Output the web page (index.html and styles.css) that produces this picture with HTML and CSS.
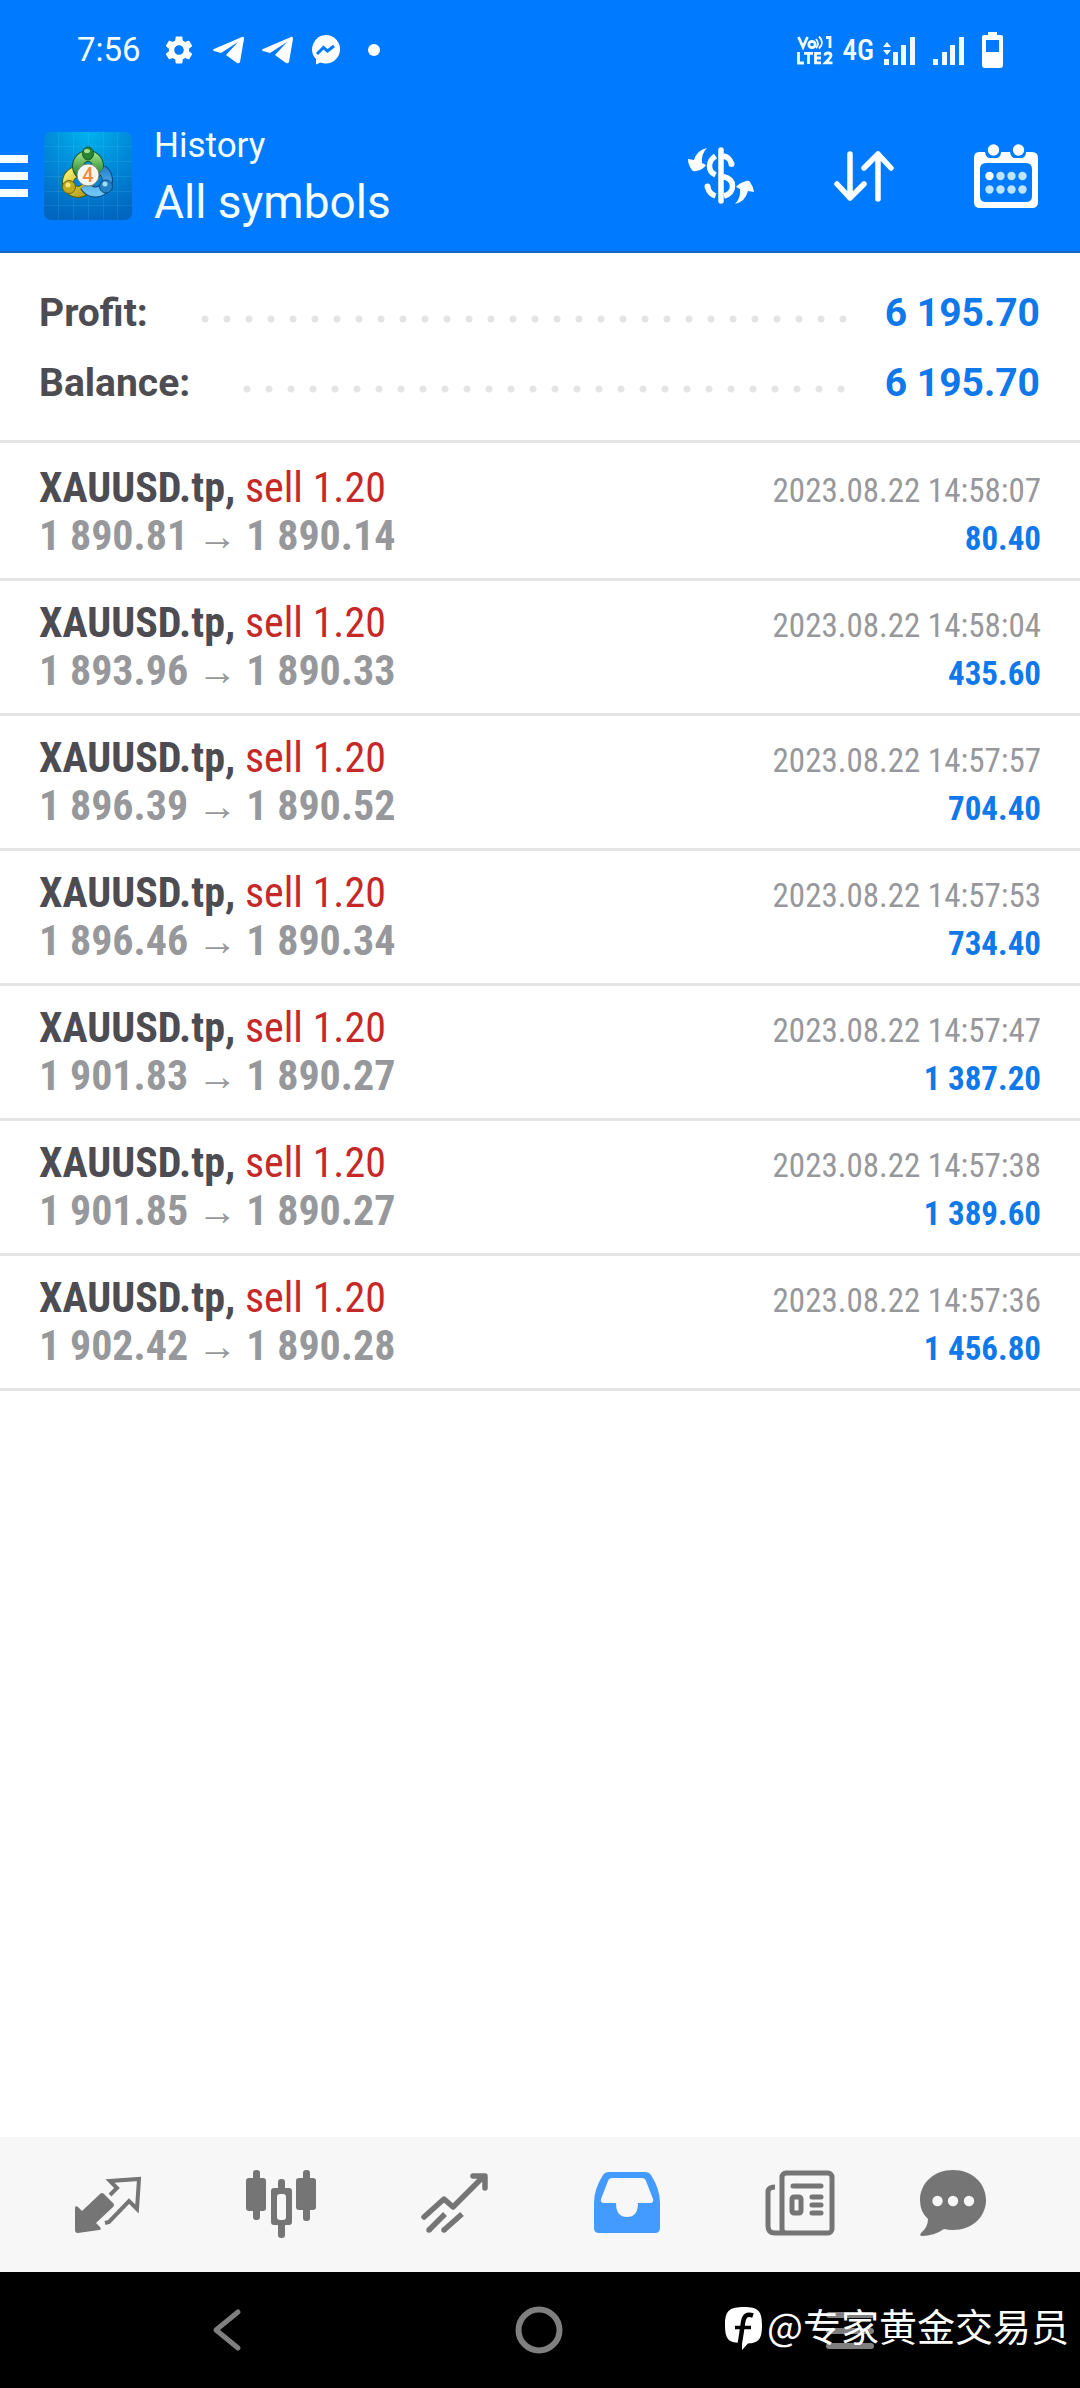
FILE: index.html
```html
<!DOCTYPE html>
<html lang="en">
<head>
<meta charset="utf-8">
<meta name="viewport" content="width=device-width, initial-scale=1">
<title>History</title>
<link rel="stylesheet" href="styles.css">
</head>
<body>
<header class="top">
  <div class="status">
    <div class="status-left">
      <span class="clock">7:56</span>
      <svg class="s-gear" width="28" height="28" viewBox="2 2 20 20" fill="#fff"><path d="M19.14 12.94c.04-.3.06-.61.06-.94s-.02-.64-.07-.94l2.03-1.58c.18-.14.23-.41.12-.61l-1.92-3.32c-.12-.22-.37-.29-.59-.22l-2.39.96c-.5-.38-1.03-.7-1.62-.94L14.4 2.81c-.04-.24-.24-.41-.48-.41h-3.84c-.24 0-.43.17-.47.41L9.25 5.35c-.59.24-1.13.57-1.62.94L5.24 5.33c-.22-.08-.47 0-.59.22L2.74 8.87c-.12.21-.08.47.12.61l2.03 1.58c-.05.3-.09.63-.09.94s.02.64.07.94l-2.03 1.58c-.18.14-.23.41-.12.61l1.92 3.32c.12.22.37.29.59.22l2.39-.96c.5.38 1.03.7 1.62.94l.36 2.54c.05.24.24.41.48.41h3.84c.24 0 .44-.17.47-.41l.36-2.54c.59-.24 1.13-.56 1.62-.94l2.39.96c.22.08.47 0 .59-.22l1.92-3.32c.12-.22.07-.47-.12-.61l-2.01-1.58zM12 15.4c-1.9 0-3.4-1.5-3.4-3.4s1.5-3.4 3.4-3.4 3.4 1.5 3.4 3.4-1.5 3.4-3.4 3.4z"/></svg>
      <svg width="31" height="28" viewBox="0 0 31 28" fill="#fff"><path d="M1 13 29 1q2-1 2 2l-4 23q-1 2-3 1L13 19l12-13L8 17 1 15q-2-1 0-2z"/></svg>
      <svg width="31" height="28" viewBox="0 0 31 28" fill="#fff"><path d="M1 13 29 1q2-1 2 2l-4 23q-1 2-3 1L13 19l12-13L8 17 1 15q-2-1 0-2z"/></svg>
      <svg width="29" height="30" viewBox="0 0 29 30"><path fill="#fff" d="M14.500 0a14.300 14.300 0 1 1-5 27.600L5 29.500V24A14.300 14.300 0 0 1 14.500 0z"/><path d="M6 19l6.500-6.500 4 3.500L23 11" fill="none" stroke="#007aff" stroke-width="3"/></svg>
      <span class="more"></span>
    </div>
    <div class="status-right">
      <svg width="36" height="30" viewBox="0 0 36 30" fill="none" stroke="#f0fbff" stroke-width="2.800"><path d="M1.500 2l4.500 10 4.500-10"/><circle cx="15" cy="9.500" r="3.200"/><path d="M19 4q4 5 0 9M22 1.500q6 6 0 12" stroke-width="1.800"/><path d="M29 2.500h4V13"/><path d="M1.500 17v11H7M7 18.300h9M11.500 18v11M24 18.300h-5.500v9.500H24M19 23h5"/><path d="M28 20.500q0-2.500 3-2.500t3 2.500q0 2-5.500 7.300h7"/></svg>
      <span class="net">4G</span>
      <svg class="sig1" width="32" height="29" viewBox="0 0 32 29" fill="#f0fbff"><path d="M1 23h5v6H1zM10 16h5v13h-5zM18 9h5v20h-5zM27 1h5v28h-5zM4 6l4 5H0zM4 19l4-5H0z"/></svg>
      <svg class="sig2" width="31" height="29" viewBox="0 0 31 29" fill="#f0fbff"><path d="M0 23h5v6H0zM9 16h5v13H9zM17 9h5v20h-5zM26 1h5v28h-5z"/></svg>
      <svg width="21" height="36" viewBox="0 0 21 36"><path fill="#fff" d="M6 0h9v3h4q2 0 2 2v28q0 3-3 3H3q-3 0-3-3V5q0-2 2-2h4z"/><path fill="#007aff" d="M4 8h13v12H4z"/></svg>
    </div>
  </div>
  <div class="appbar">
    <button class="menu" aria-label="Menu"><i></i><i></i><i></i></button>
    <svg class="logo" width="88" height="88" viewBox="0 0 88 88">
      <defs>
        <radialGradient id="bg" cx=".5" cy="0" r="1"><stop offset="0" stop-color="#00b2ee"/><stop offset=".5" stop-color="#0089d8"/><stop offset="1" stop-color="#0066c0"/></radialGradient>
        <linearGradient id="gr" x2="0" y2="1"><stop offset="0" stop-color="#8fd67c"/><stop offset="1" stop-color="#1d7d2a"/></linearGradient>
        <linearGradient id="ye" x2="1" y2="1"><stop offset="0" stop-color="#f3ec6a"/><stop offset="1" stop-color="#b59a14"/></linearGradient>
        <linearGradient id="bl" x2="0" y2="1"><stop offset="0" stop-color="#2a86cf"/><stop offset="1" stop-color="#6cc3f5"/></linearGradient>
      </defs>
      <rect width="88" height="88" rx="7" fill="url(#bg)"/>
      <path d="M14.500 0v88M29.500 0v88M44.500 0v88M59.500 0v88M73.500 0v88M0 14.500h88M0 29.500h88M0 44.500h88M0 59.500h88M0 73.500h88" stroke="#6fd0f5" stroke-opacity=".14"/>
      <circle cx="34" cy="50" r="10" fill="none" stroke="#54600f" stroke-width="12"/>
      <circle cx="34" cy="50" r="10" fill="none" stroke="url(#ye)" stroke-width="10"/>
      <circle cx="44" cy="34" r="10" fill="none" stroke="#14592a" stroke-width="12"/>
      <circle cx="44" cy="34" r="10" fill="none" stroke="url(#gr)" stroke-width="10"/>
      <path d="M58 38a12 12 0 1 1-17 16" fill="none" stroke="#0b4278" stroke-width="11"/>
      <path d="M58 38a12 12 0 1 1-17 16" fill="none" stroke="url(#bl)" stroke-width="9"/>
      <ellipse cx="44" cy="21.500" rx="5.500" ry="6.500" fill="#2a8434" stroke="#14592a"/><ellipse cx="43" cy="19" rx="3" ry="2" fill="#a5e08f"/>
      <circle cx="25" cy="55" r="6.500" fill="#c4a91c" stroke="#6b6410"/><circle cx="24" cy="53" r="2.500" fill="#f3e77a"/>
      <circle cx="62" cy="54.500" r="6.500" fill="#2382c6" stroke="#0b4a80"/><circle cx="61" cy="52" r="2.500" fill="#a4dcf8"/>
      <circle cx="44" cy="43" r="11" fill="#f4f6f6" stroke="#75846f"/>
      <text class="logo-digit" x="44" y="50" text-anchor="middle">4</text>
    </svg>
    <h1 class="titles"><span class="kicker">History</span><span class="title">All symbols</span></h1>
    <div class="actions">
      <button aria-label="Symbol"><svg width="66" height="58" viewBox="0 0 66 58"><path fill="#fbffff" d="M19 1q-6 6-5 15l4 2q-3 5-10 6-3 1-4-1Q0 18 0 12l6 1Q9 3 19 1zM47 57q6-6 5-15l-4-2q3-4 10-6 3-1 4 1 3 4 4 10l-6-1Q57 55 47 57z"/><path d="M33 3v51" stroke="#fbffff" stroke-width="5.500" stroke-linecap="round"/><path d="M27.500 9q-6 4-6 10t6 9M19.500 40q2 7 8 9" fill="none" stroke="#fbffff" stroke-width="5.500"/><circle cx="19.500" cy="39.500" r="3" fill="#fbffff"/><path d="M35 9q7 1 8.500 8M35 29.500q9.500 2 9.500 9.500T36 49" fill="none" stroke="#fbffff" stroke-width="5.500"/><circle cx="43.500" cy="17" r="3" fill="#fbffff"/></svg></button>
      <button aria-label="Sort"><svg width="60" height="52" viewBox="0 0 60 52" fill="none" stroke="#fbffff" stroke-width="5.500" stroke-linecap="round" stroke-linejoin="round"><path d="M16 4v44M3 34l13 14 14-14M44 49V4M30 18 44 4l13 14"/></svg></button>
      <button aria-label="Period"><svg width="64" height="64" viewBox="0 0 64 64"><path fill="#fff" fill-rule="evenodd" d="M5 8h6q1 6 5 6h7q4-1 4-6h9q1 6 5 6h7q4-1 4-6h6q6 0 6 6v44q0 6-6 6H6q-6 0-6-6V14q0-6 5-6zm7 11q-6 0-6 6v27q0 6 6 6h40q6 0 6-6V25q0-6-6-6z"/><circle cx="19.500" cy="6" r="5.700" fill="#fff"/><circle cx="44.500" cy="6" r="5.700" fill="#fff"/><g fill="#bfe4ff"><circle cx="15.500" cy="32" r="4.200" fill="#fff"/><circle cx="26.500" cy="32" r="4.200"/><circle cx="37.500" cy="32" r="4.200"/><circle cx="48.500" cy="32" r="4.200"/><circle cx="15.500" cy="45.500" r="4.200"/><circle cx="26.500" cy="45.500" r="4.200"/><circle cx="37.500" cy="45.500" r="4.200"/><circle cx="48.500" cy="45.500" r="4.200"/></g></svg></button>
    </div>
  </div>
</header>
<main>
  <dl class="summary">
    <div class="sum-row"><dt>Profit:</dt><dd>6 195.70</dd></div>
    <div class="sum-row"><dt>Balance:</dt><dd>6 195.70</dd></div>
  </dl>
  <ul class="deals">
    <li><span class="sym"><b>XAUUSD.tp,</b> <span class="side">sell 1.20</span></span><time>2023.08.22 14:58:07</time><span class="price">1 890.81<span class="to">→</span>1 890.14</span><span class="gain">80.40</span></li>
    <li><span class="sym"><b>XAUUSD.tp,</b> <span class="side">sell 1.20</span></span><time>2023.08.22 14:58:04</time><span class="price">1 893.96<span class="to">→</span>1 890.33</span><span class="gain">435.60</span></li>
    <li><span class="sym"><b>XAUUSD.tp,</b> <span class="side">sell 1.20</span></span><time>2023.08.22 14:57:57</time><span class="price">1 896.39<span class="to">→</span>1 890.52</span><span class="gain">704.40</span></li>
    <li><span class="sym"><b>XAUUSD.tp,</b> <span class="side">sell 1.20</span></span><time>2023.08.22 14:57:53</time><span class="price">1 896.46<span class="to">→</span>1 890.34</span><span class="gain">734.40</span></li>
    <li><span class="sym"><b>XAUUSD.tp,</b> <span class="side">sell 1.20</span></span><time>2023.08.22 14:57:47</time><span class="price">1 901.83<span class="to">→</span>1 890.27</span><span class="gain">1 387.20</span></li>
    <li><span class="sym"><b>XAUUSD.tp,</b> <span class="side">sell 1.20</span></span><time>2023.08.22 14:57:38</time><span class="price">1 901.85<span class="to">→</span>1 890.27</span><span class="gain">1 389.60</span></li>
    <li><span class="sym"><b>XAUUSD.tp,</b> <span class="side">sell 1.20</span></span><time>2023.08.22 14:57:36</time><span class="price">1 902.42<span class="to">→</span>1 890.28</span><span class="gain">1 456.80</span></li>
  </ul>
</main>
<nav class="tabs">
  <button aria-label="Quotes"><svg width="72" height="72" viewBox="0 0 72 72" fill="#757575"><path d="M3 38q0-3 3-1l4 4 18-17q2-2 4 0l9 9q2 2 0 4L24 53l4 4q2 3-1 3L6 63q-3 0-3-3z"/><path d="M38 25l7-7-7-7 29-2-2 30-8-8-20 21-4 1" fill="none" stroke="#757575" stroke-width="4"/></svg></button>
  <button aria-label="Charts"><svg width="72" height="72" viewBox="0 0 72 72" fill="#757575"><rect x="8" y="0" width="7" height="50" rx="3"/><rect x="1" y="8" width="20" height="33" rx="3"/><rect x="58" y="0" width="7" height="51" rx="3"/><rect x="51" y="8" width="20" height="32" rx="3"/><rect x="33" y="9" width="7" height="14" rx="3"/><rect x="33" y="50" width="7" height="18" rx="3"/><path fill-rule="evenodd" d="M29 18h15q3 0 3 3v31q0 3-3 3H29q-3 0-3-3V21q0-3 3-3zm6 6q-3 0-3 3v20q0 3 3 3h3q3 0 3-3V27q0-3-3-3z"/></svg></button>
  <button aria-label="Trade"><svg width="72" height="72" viewBox="0 0 72 72" fill="none" stroke="#757575" stroke-width="5.500"><path stroke-linecap="round" stroke-linejoin="round" d="M6 47 26 29l9 8 29-29M55 6h12v12"/><path d="M60 5h9v9z" fill="#757575" stroke="none"/><path d="M11 60l16-16M26 60l18-16"/><path d="M11 60h0M26 60h0" stroke-linecap="round"/></svg></button>
  <button aria-label="History"><svg width="72" height="72" viewBox="0 0 72 72"><path fill="#439bff" fill-rule="evenodd" d="M18 2h36q4 0 6 3 9 14 9 28v25q0 5-5 5H8q-5 0-5-5V33Q3 19 12 5q2-3 6-3zm3 6q-3 0-4 3L10 29q-1 4 3 4h12q0 14 11 14t11-14h12q4 0 3-4l-7-18q-1-3-4-3z"/></svg></button>
  <button aria-label="News"><svg width="72" height="72" viewBox="0 0 72 72" fill="none" stroke="#757575" stroke-width="5"><rect x="18" y="3" width="50" height="60" rx="4"/><path d="M11 17q-7 0-7 5v34q0 7 7 7h10"/><path stroke-linecap="round" d="M29 16h28M48 27h9M48 35h9M48 43h9"/><rect x="28" y="27" width="9" height="16" rx="2"/></svg></button>
  <button aria-label="Messages"><svg width="72" height="72" viewBox="0 0 72 72" fill="#757575"><path d="M36 0c19 0 33 13 33 30S55 60 36 60q-5 0-9-1-10 7-22 7-3 0-1-3 7-6 7-14Q3 42 3 30C3 13 17 0 36 0z"/><g fill="#f7f7f7"><circle cx="20.500" cy="31" r="5.200"/><circle cx="36" cy="31" r="5.200"/><circle cx="52" cy="31" r="5.200"/></g></svg></button>
</nav>
<footer class="system">
  <button aria-label="Back"><svg width="48" height="48" viewBox="0 0 48 48" fill="none" stroke="#7f7f7f" stroke-width="5" stroke-linecap="round" stroke-linejoin="round"><path d="M35 6 13 24l22 18"/></svg></button>
  <button aria-label="Home"><svg width="48" height="48" viewBox="0 0 48 48"><circle cx="24" cy="24" r="20.500" fill="none" stroke="#7f7f7f" stroke-width="6"/></svg></button>
  <button aria-label="Recent apps"><svg width="48" height="48" viewBox="0 0 48 48" fill="#7f7f7f"><rect y="6" width="48" height="6" rx="3"/><rect y="22" width="48" height="6" rx="3"/><rect y="37" width="48" height="6" rx="3"/></svg></button>
  <div class="credit"><svg width="38" height="43" viewBox="0 0 38 43"><path fill="#fff" d="M19 0C33 0 37 4 37 18S34 36 23 36.500L17 43V36C4 36 0 33 0 18S5 0 19 0z"/><path d="M28 8.500c-6-2-9 0-10 7-1 8-2 14-3.500 23" fill="none" stroke="#000" stroke-width="4.500"/><path d="M10 20.500h16" stroke="#000" stroke-width="3.500"/></svg><span>@专家黄金交易员</span></div>
</footer>
</body>
</html>
```
FILE: styles.css
```css
* { box-sizing: border-box; }
body {
  margin: 0;
  min-height: 100vh;
  display: flex;
  flex-direction: column;
  background: #fff;
  color: #4d4c52;
  font-family: Roboto, "Liberation Sans", sans-serif;
}
button { border: 0; padding: 0; background: none; display: flex; align-items: center; justify-content: center; }
svg { display: block; flex: none; }
ul, dl, dd, h1 { margin: 0; padding: 0; }

.top { background: #007aff; color: #f5ffff; border-bottom: 2px solid #1669c4; }
.status { height: 100px; display: flex; align-items: center; justify-content: space-between; padding: 0 77px; }
.status-left, .status-right { display: flex; align-items: center; }
.status-left { gap: 18px; }
.clock { font-size: 33px; line-height: 40px; }
.s-gear { margin-left: 6px; margin-right: 2px; }
.more { width: 12px; height: 12px; border-radius: 50%; background: #fff; margin-left: 10px; }
.status-right { gap: 9px; }
.net { font-family: "Roboto Condensed", Roboto, sans-serif; font-size: 29px; font-weight: 500; line-height: 40px; }
.sig1, .sig2 { margin-right: 9px; }

.appbar { height: 151px; display: flex; align-items: center; padding-right: 42px; }
.menu { width: 28px; flex-direction: column; align-items: stretch; gap: 9px; margin-right: 16px; }
.menu i { height: 8px; background: #f5ffff; }
.logo-digit { font: 500 20px Roboto, sans-serif; fill: #f08a3c; }
.titles { flex: 1; margin-left: 22px; font-weight: 400; }
.kicker, .title { display: block; }
.kicker { font-size: 35px; line-height: 52px; }
.title { font-size: 46px; line-height: 60px; }
.actions { display: flex; align-items: center; gap: 80px; }

main { flex: 1; }
.summary { padding: 25px 40px 22px; border-bottom: 3px solid #e4e4e4; font-size: 39px; line-height: 70px; font-weight: 700; }
.sum-row { display: flex; }
.sum-row::before {
  content: "";
  order: 1;
  flex: 1;
  margin: 0 37px 0 53px;
  background: radial-gradient(circle at 4px 4px, #e4e4e4 3px, transparent 4px) 0 37px / 22px 8px repeat-x;
}
.sum-row dt { margin-left: -1px; }
.sum-row dd { order: 2; color: #0f78ea; }

.deals { list-style: none; padding-top: 3px; font-family: "Roboto Condensed", "Liberation Sans Narrow", Roboto, sans-serif; }
.deals li {
  display: grid;
  grid-template-columns: 1fr auto;
  grid-template-rows: 48px 48px;
  align-items: baseline;
  padding: 18px 39px;
  border-bottom: 3px solid #e4e4e4;
}
.sym, .price { font-size: 42px; line-height: 48px; white-space: nowrap; }
.side { color: #c62828; }
.price { font-weight: 700; color: #97989b; }
.to { display: inline-block; width: 58px; text-align: center; font: 700 40px/40px "Liberation Serif", serif; }
.deals time, .gain { font-size: 33px; line-height: 42px; text-align: right; }
.deals time { color: #97989b; }
.gain { color: #0f78ea; font-weight: 700; }

.tabs {
  height: 135px;
  background: #f7f7f7;
  display: grid;
  grid-template-columns: repeat(5, 173fr) 133fr;
  align-items: center;
  padding: 3px 61px 0 21px;
}
.system {
  position: relative;
  height: 116px;
  background: #000;
  display: flex;
  align-items: center;
  justify-content: space-between;
  padding: 0 206px 0 203px;
}
.credit {
  position: absolute;
  right: 11px;
  top: 33px;
  display: flex;
  align-items: center;
  gap: 4px;
  color: #fff;
  font: 400 38px/40px "Noto Sans CJK SC", sans-serif;
}
.credit span { padding-bottom: 6px; }
```
